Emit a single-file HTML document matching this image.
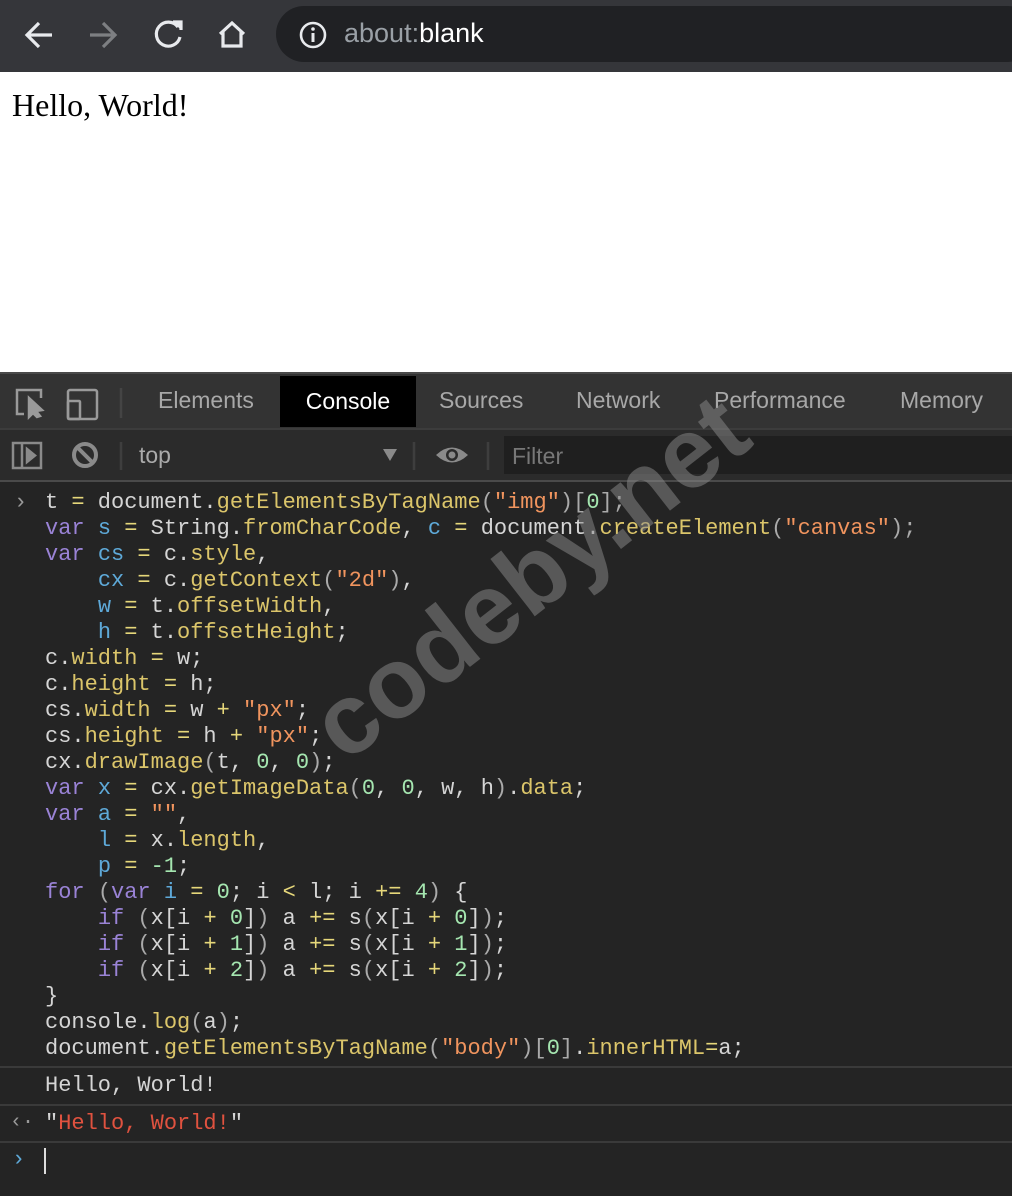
<!DOCTYPE html>
<html><head><style>
*{margin:0;padding:0;box-sizing:border-box}
body{width:1012px;height:1196px;overflow:hidden;background:#242424;font-family:"Liberation Sans",sans-serif;position:relative}
.top{position:absolute;left:0;top:0;width:1012px;height:72px;background:#35363a}
.pill{position:absolute;left:276px;top:6px;width:760px;height:56px;border-radius:28px;background:#202124}
.url{position:absolute;left:344px;top:18px;font-size:27px;color:#9aa0a6}
.url b{font-weight:normal;color:#fff}
.page{position:absolute;left:0;top:72px;width:1012px;height:300px;background:#fff}
.page div{position:absolute;left:12px;top:15px;font:32px "Liberation Serif",serif;color:#000}
.tabs{position:absolute;left:0;top:372px;width:1012px;height:56px;background:#333;border-top:2px solid #4a4a4a}
.tab{position:absolute;top:13px;font-size:23px;color:#a8a8a8}
.ctab{position:absolute;left:280px;top:2px;width:136px;height:51px;background:#000;color:#fff;font-size:23px;text-align:center;line-height:50px}
.bar{position:absolute;left:0;top:428px;width:1012px;height:54px;background:#2b2b2b;border-top:2px solid #3c3c3c;border-bottom:2px solid #4a4a4a}
.filter{position:absolute;left:504px;top:6px;width:520px;height:38px;background:#1f1f1f;color:#777;font-size:23px;padding:7px 8px}
.code{position:absolute;left:45px;top:490px;font:22px/26px "Liberation Mono",monospace;color:#d5d5d5;white-space:pre}
.k{color:#9a83d6}.v{color:#5ea9d8}.m{color:#dbc56a}.s{color:#f0945e}.n{color:#a5e6b0}.o{color:#e6d77a}.p{color:#aaa}
.line{position:absolute;left:0;width:1012px;height:2px;background:#3a3a3a}
.mono{position:absolute;font:22px "Liberation Mono",monospace;white-space:pre}
.wm{position:absolute;left:250px;top:520px;font:bold 100px "Liberation Sans",sans-serif;color:rgba(140,140,140,0.5);transform:rotate(-38deg);transform-origin:center;width:560px;text-align:center}
</style></head><body>
<div class="top">
<svg width="280" height="70" style="position:absolute;left:0;top:0" fill="none" stroke-width="3.2">
<path d="M52 35H28M39 23L27 35L39 47" stroke="#e8eaed"/>
<path d="M90 35H114M103 23L115 35L103 47" stroke="#7d7f82"/>
<path d="M178 27A12 12 0 1 0 180 37" stroke="#e8eaed"/><path d="M173 22H181V30" stroke="#e8eaed" fill="#e8eaed"/>
<path d="M220 34L232 23L244 34M223 32V46H241V32" stroke="#e8eaed"/>
</svg>
<div class="pill"></div>
<svg width="30" height="30" style="position:absolute;left:298px;top:20px"><circle cx="15" cy="15" r="12" stroke="#e8eaed" stroke-width="2.6" fill="none"/><rect x="13.5" y="13" width="3" height="9" fill="#e8eaed"/><circle cx="15" cy="9" r="1.8" fill="#e8eaed"/></svg>
<div class="url">about:<b>blank</b></div>
</div>
<div class="page"><div>Hello, World!</div></div>
<div class="tabs">
<svg width="130" height="50" style="position:absolute;left:0;top:2px" fill="none" stroke="#9a9a9a" stroke-width="2.5">
<path d="M24 38H17V14H41V22"/><path d="M29 22L42 34L36 35L40 40L37 41L33 37L29 41Z" fill="#9a9a9a"/>
<rect x="68" y="14" width="29" height="29" rx="2"/><rect x="68" y="25" width="12" height="18" rx="1"/>
<path d="M121 12V42" stroke="#444"/>
</svg>
<div class="tab" style="left:158px">Elements</div>
<div class="ctab">Console</div>
<div class="tab" style="left:439px">Sources</div>
<div class="tab" style="left:576px">Network</div>
<div class="tab" style="left:714px">Performance</div>
<div class="tab" style="left:900px">Memory</div>
</div>
<div class="bar">
<svg width="500" height="50" style="position:absolute;left:0;top:0" fill="none" stroke="#8a8a8a" stroke-width="2.5">
<rect x="13" y="13" width="28" height="25"/><path d="M22 13V38"/><path d="M27 19L35 25.5L27 32Z" fill="#8a8a8a"/>
<circle cx="85" cy="25" r="11" stroke-width="4"/><path d="M77 17L93 33" stroke-width="4"/>
<path d="M121 12V40M414 12V40M488 12V40" stroke="#3e3e3e"/>
<path d="M383 19H397L390 31Z" fill="#8a8a8a" stroke="none"/>
<path d="M436 25Q452 10 468 25Q452 40 436 25Z" fill="#8a8a8a" stroke="none"/><circle cx="452" cy="25" r="6" fill="#2b2b2b" stroke="none"/><circle cx="452" cy="25" r="3.5" fill="#8a8a8a" stroke="none"/>
</svg>
<div style="position:absolute;left:139px;top:12px;font-size:23px;color:#aaa">top</div>
<div class="filter">Filter</div>
</div>
<div class="mono" style="left:14px;top:490px;color:#999">›</div>
<div class="code">t <span class="o">=</span> document.<span class="m">getElementsByTagName</span><span class="p">(</span><span class="s">"img"</span><span class="p">)[</span><span class="n">0</span><span class="p">];</span>
<span class="k">var</span> <span class="v">s</span> <span class="o">=</span> String.<span class="m">fromCharCode</span>, <span class="v">c</span> <span class="o">=</span> document.<span class="m">createElement</span><span class="p">(</span><span class="s">"canvas"</span><span class="p">);</span>
<span class="k">var</span> <span class="v">cs</span> <span class="o">=</span> c.<span class="m">style</span>,
    <span class="v">cx</span> <span class="o">=</span> c.<span class="m">getContext</span><span class="p">(</span><span class="s">"2d"</span><span class="p">)</span>,
    <span class="v">w</span> <span class="o">=</span> t.<span class="m">offsetWidth</span>,
    <span class="v">h</span> <span class="o">=</span> t.<span class="m">offsetHeight</span>;
c.<span class="m">width</span> <span class="o">=</span> w;
c.<span class="m">height</span> <span class="o">=</span> h;
cs.<span class="m">width</span> <span class="o">=</span> w <span class="o">+</span> <span class="s">"px"</span>;
cs.<span class="m">height</span> <span class="o">=</span> h <span class="o">+</span> <span class="s">"px"</span>;
cx.<span class="m">drawImage</span><span class="p">(</span>t, <span class="n">0</span>, <span class="n">0</span><span class="p">)</span>;
<span class="k">var</span> <span class="v">x</span> <span class="o">=</span> cx.<span class="m">getImageData</span><span class="p">(</span><span class="n">0</span>, <span class="n">0</span>, w, h<span class="p">)</span>.<span class="m">data</span>;
<span class="k">var</span> <span class="v">a</span> <span class="o">=</span> <span class="s">""</span>,
    <span class="v">l</span> <span class="o">=</span> x.<span class="m">length</span>,
    <span class="v">p</span> <span class="o">=</span> <span class="n">-1</span>;
<span class="k">for</span> <span class="p">(</span><span class="k">var</span> <span class="v">i</span> <span class="o">=</span> <span class="n">0</span>; i <span class="o">&lt;</span> l; i <span class="o">+=</span> <span class="n">4</span><span class="p">)</span> {
    <span class="k">if</span> <span class="p">(</span>x[i <span class="o">+</span> <span class="n">0</span>]<span class="p">)</span> a <span class="o">+=</span> s<span class="p">(</span>x[i <span class="o">+</span> <span class="n">0</span>]<span class="p">)</span>;
    <span class="k">if</span> <span class="p">(</span>x[i <span class="o">+</span> <span class="n">1</span>]<span class="p">)</span> a <span class="o">+=</span> s<span class="p">(</span>x[i <span class="o">+</span> <span class="n">1</span>]<span class="p">)</span>;
    <span class="k">if</span> <span class="p">(</span>x[i <span class="o">+</span> <span class="n">2</span>]<span class="p">)</span> a <span class="o">+=</span> s<span class="p">(</span>x[i <span class="o">+</span> <span class="n">2</span>]<span class="p">)</span>;
}
console.<span class="m">log</span><span class="p">(</span>a<span class="p">)</span>;
document.<span class="m">getElementsByTagName</span><span class="p">(</span><span class="s">"body"</span><span class="p">)[</span><span class="n">0</span><span class="p">]</span>.<span class="m">innerHTML</span><span class="o">=</span>a;</div>
<div class="line" style="top:1066px"></div>
<div class="mono" style="left:45px;top:1073px;color:#d5d5d5">Hello, World!</div>
<div class="line" style="top:1104px"></div>
<div class="mono" style="left:10px;top:1111px;color:#999;font-size:20px">‹·</div>
<div class="mono" style="left:45px;top:1111px;color:#d5d5d5">"<span style="color:#e0523f">Hello, World!</span>"</div>
<div class="line" style="top:1141px"></div>
<div class="mono" style="left:12px;top:1147px;color:#5ea9d8">›</div>
<div style="position:absolute;left:44px;top:1148px;width:2px;height:26px;background:#ddd"></div>
<div class="wm">codeby.net</div>
</body></html>
